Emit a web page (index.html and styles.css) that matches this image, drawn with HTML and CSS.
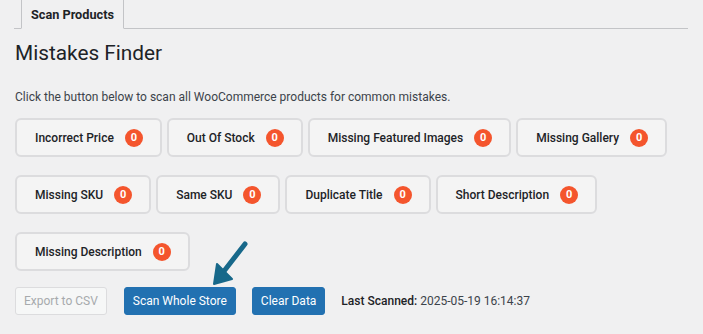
FILE: index.html
```html
<!DOCTYPE html>
<html lang="en">
<head>
<meta charset="utf-8">
<title>Mistakes Finder</title>
<link rel="stylesheet" href="styles.css">
</head>
<body>
<div class="wrap">
  <nav class="tabs">
    <span class="tab tab-active">Scan Products</span>
  </nav>
  <h1 class="title">Mistakes Finder</h1>
  <p class="intro">Click the button below to scan all WooCommerce products for common mistakes.</p>
  <div class="checks">
    <button class="check">Incorrect Price <span class="badge">0</span></button>
    <button class="check">Out Of Stock <span class="badge">0</span></button>
    <button class="check">Missing Featured Images <span class="badge">0</span></button>
    <button class="check">Missing Gallery <span class="badge">0</span></button>
    <button class="check">Missing SKU <span class="badge">0</span></button>
    <button class="check">Same SKU <span class="badge">0</span></button>
    <button class="check">Duplicate Title <span class="badge">0</span></button>
    <button class="check">Short Description <span class="badge">0</span></button>
    <button class="check">Missing Description <span class="badge">0</span></button>
  </div>
  <div class="actions">
    <button class="btn btn-disabled" disabled>Export to CSV</button>
    <button class="btn btn-primary btn-scan">Scan Whole Store</button>
    <button class="btn btn-primary">Clear Data</button>
    <span class="last"><strong>Last Scanned:</strong> 2025-05-19 16:14:37</span>
    <svg class="arrow" width="44" height="50" viewBox="0 0 44 50" aria-hidden="true">
      <line x1="37" y1="4" x2="13" y2="35" stroke="#17688a" stroke-width="5" stroke-linecap="round"/>
      <polygon points="6,44 9,24 24,39" fill="#17688a" stroke="#17688a" stroke-width="2" stroke-linejoin="round"/>
    </svg>
  </div>
</div>
</body>
</html>
```

FILE: styles.css
```css
html, body {
  margin: 0;
  padding: 0;
  background: #f0f0f1;
}

body {
  font-family: Roboto, "Noto Sans", sans-serif;
  color: #1d2327;
}

.wrap {
  padding: 0 15px;
}

.tabs {
  display: flex;
  height: 28px;
  border-bottom: 1px solid #c3c4c7;
  margin-left: -1px;
  padding-left: 7px;
}

.tab {
  display: flex;
  align-items: center;
  padding: 0 9px;
  height: 29px;
  font-size: 12.7px;
  font-weight: 700;
  color: #1d2327;
  border: 1px solid #c3c4c7;
  border-top: none;
  box-sizing: border-box;
}

.tab-active {
  background: #f0f0f1;
  border-bottom-color: #f0f0f1;
}

.title {
  margin: 9px 0 0;
  font-size: 20.8px;
  font-weight: 400;
  line-height: 30px;
  color: #1d2327;
}

.intro {
  margin: 20px 0 0;
  font-size: 12px;
  line-height: 18px;
  color: #3c434a;
}

.checks {
  display: flex;
  flex-wrap: wrap;
  column-gap: 5px;
  row-gap: 18px;
  margin-top: 12px;
}

.check {
  display: flex;
  align-items: center;
  gap: 11px;
  height: 39px;
  padding: 0 17px 0 18px;
  border: 2px solid #dcdcde;
  border-radius: 6px;
  background: #f4f4f4;
  font-family: inherit;
  font-size: 12px;
  font-weight: 500;
  color: #1d2327;
  box-sizing: border-box;
}

.badge {
  display: inline-flex;
  align-items: center;
  justify-content: center;
  width: 18px;
  height: 18px;
  border-radius: 50%;
  background: #f4552d;
  color: #fff;
  font-size: 11px;
  font-weight: 700;
}

.actions {
  position: relative;
  display: flex;
  align-items: center;
  margin-top: 16px;
}

.btn {
  height: 28px;
  padding: 0 8px;
  border: 1px solid;
  border-radius: 3px;
  font-family: inherit;
  font-size: 12px;
  box-sizing: border-box;
}

.btn-disabled {
  background: #f6f7f7;
  border-color: #dcdcde;
  color: #a7aaad;
  margin-right: 17px;
}

.btn-primary {
  background: #2271b1;
  border-color: #2271b1;
  color: #fff;
  margin-right: 16px;
}

.last {
  font-size: 12px;
  color: #3c434a;
}

.last strong {
  font-weight: 500;
  color: #1d2327;
}

.arrow {
  position: absolute;
  left: 193px;
  top: -47px;
}
```
